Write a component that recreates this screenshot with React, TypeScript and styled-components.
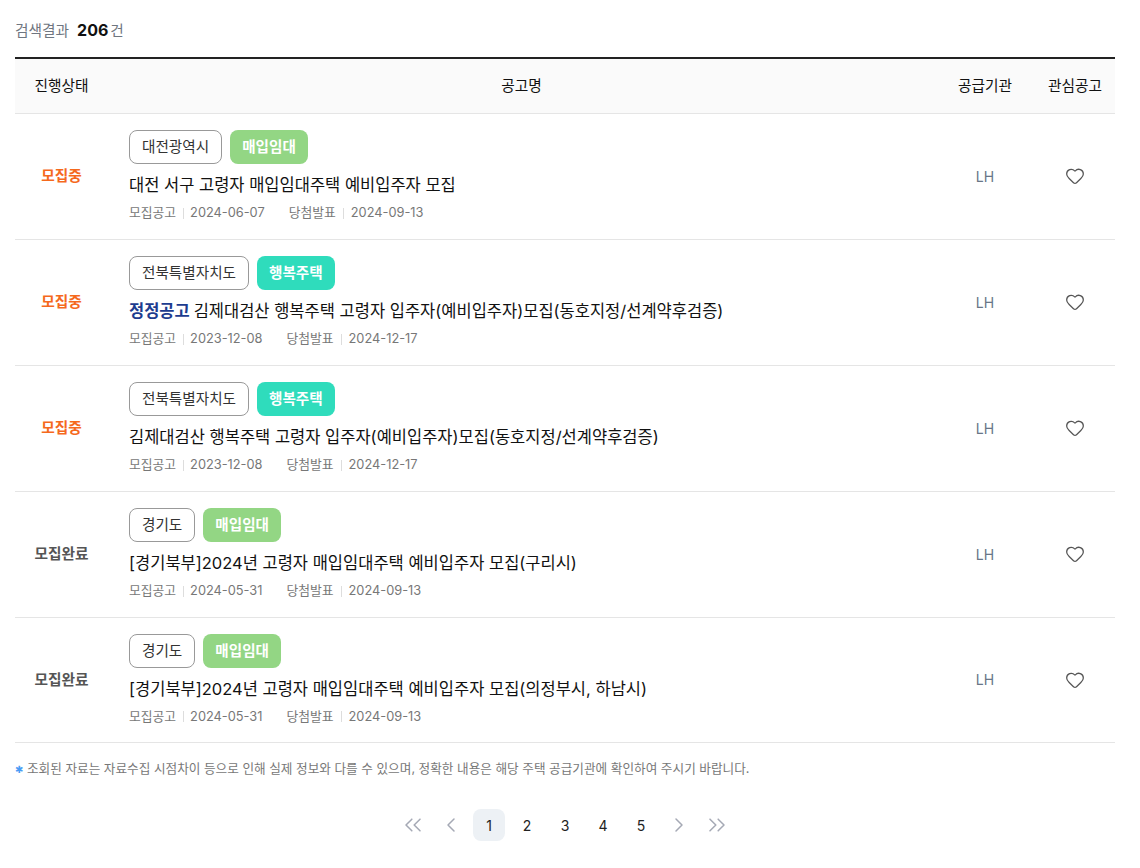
import React from "react";
import styled, { createGlobalStyle } from "styled-components";
import { ChevronLeft, ChevronRight, ChevronsLeft, ChevronsRight, Heart } from "lucide-react";

const GlobalStyle = createGlobalStyle`
  body {
    margin: 0;
    background: #fff;
    font-family: Inter, "Noto Sans CJK KR", sans-serif;
    color: #111;
  }
`;

const Page = styled.div`
  width: 1100px;
  padding: 0 25px 0 15px;
`;

const Summary = styled.div`
  display: flex;
  align-items: center;
  height: 57px;
  padding-top: 2px;
  box-sizing: border-box;
  font-size: 14.7px;
  color: #6f7680;
`;

const Count = styled.strong`
  margin-left: 8px;
  margin-right: 2px;
  font-size: 16px;
  font-weight: 700;
  color: #111;
`;

const HeadRow = styled.div`
  display: grid;
  grid-template-columns: 93px 827px 100px 80px;
  align-items: center;
  height: 51px;
  padding-bottom: 3px;
  border-top: 2px solid #222;
  border-bottom: 1px solid #e5e5e5;
  background: #fafafa;
  font-size: 14.7px;
  text-align: center;
`;

const Row = styled.div`
  display: grid;
  grid-template-columns: 93px 827px 100px 80px;
  align-items: center;
  height: 125px;
  border-bottom: 1px solid #e5e5e5;
  text-align: center;
  &:nth-of-type(7) {
    height: 124px;
  }
`;

const Status = styled.div<{ $open: boolean }>`
  margin-top: -4px;
  font-size: 14.7px;
  font-weight: 700;
  color: ${(p) => (p.$open ? "#f5691d" : "#555")};
`;

const Body = styled.div`
  display: flex;
  flex-direction: column;
  align-items: flex-start;
  padding-left: 21px;
  text-align: left;
`;

const Tags = styled.div`
  display: flex;
  gap: 8px;
`;

const Region = styled.span`
  display: flex;
  align-items: center;
  height: 34px;
  padding: 0 12px 3px;
  box-sizing: border-box;
  border: 1px solid #999;
  border-radius: 8px;
  font-size: 14.6px;
  color: #333;
`;

const Kind = styled.span<{ $color: string }>`
  display: flex;
  align-items: center;
  height: 34px;
  padding: 0 12px 3px;
  box-sizing: border-box;
  border-radius: 8px;
  font-size: 14.6px;
  font-weight: 700;
  color: #fff;
  background: ${(p) => p.$color};
`;

const Title = styled.div`
  margin-top: 9px;
  font-size: 16.5px;
  line-height: 24px;
  color: #111;
`;

const Fix = styled.b`
  font-weight: 700;
  color: #1d3c8f;
`;

const Meta = styled.div`
  display: flex;
  align-items: center;
  margin-top: 6px;
  font-size: 12.8px;
  line-height: 20px;
  color: #777;
`;

const MetaLabel = styled.span`
  display: flex;
  align-items: center;
  &::after {
    content: "";
    width: 1px;
    height: 11px;
    margin: 0 7px;
    background: #ddd;
  }
`;

const MetaDate = styled.span`
  margin-left: -1px;
  margin-right: 24px;
`;

const Agency = styled.div`
  margin-top: -1px;
  font-size: 14px;
  color: #687687;
`;

const Like = styled.div`
  display: flex;
  justify-content: center;
  margin-top: -1px;
  color: #555;
`;

const Note = styled.p`
  margin: 17px 0 0;
  font-size: 12.65px;
  line-height: 18px;
  color: #777;
`;

const Star = styled.span`
  font-family: "DejaVu Sans", sans-serif;
  font-size: 10px;
  color: #4a9cf5;
`;

const Pager = styled.nav`
  display: flex;
  justify-content: center;
  align-items: center;
  gap: 6px;
  margin-top: 30px;
`;

const PageButton = styled.button<{ $active?: boolean }>`
  display: flex;
  align-items: center;
  justify-content: center;
  width: 32px;
  height: 32px;
  padding: 0;
  border: 0;
  border-radius: 8px;
  background: ${(p) => (p.$active ? "#edf1f5" : "transparent")};
  font: 14px Inter, sans-serif;
  color: #222;
`;

const ArrowButton = styled(PageButton)`
  color: #a5a9b5;
`;

const items = [
  { open: true, region: "대전광역시", kind: "매입임대", title: "대전 서구 고령자 매입임대주택 예비입주자 모집", posted: "2024-06-07", result: "2024-09-13" },
  { open: true, region: "전북특별자치도", kind: "행복주택", fix: true, title: "김제대검산 행복주택 고령자 입주자(예비입주자)모집(동호지정/선계약후검증)", posted: "2023-12-08", result: "2024-12-17" },
  { open: true, region: "전북특별자치도", kind: "행복주택", title: "김제대검산 행복주택 고령자 입주자(예비입주자)모집(동호지정/선계약후검증)", posted: "2023-12-08", result: "2024-12-17" },
  { open: false, region: "경기도", kind: "매입임대", title: "[경기북부]2024년 고령자 매입임대주택 예비입주자 모집(구리시)", posted: "2024-05-31", result: "2024-09-13" },
  { open: false, region: "경기도", kind: "매입임대", title: "[경기북부]2024년 고령자 매입임대주택 예비입주자 모집(의정부시, 하남시)", posted: "2024-05-31", result: "2024-09-13" },
];

export default function App() {
  return (
    <Page>
      <GlobalStyle />
      <Summary>
        검색결과 <Count>206</Count> 건
      </Summary>
      <HeadRow>
        <div>진행상태</div>
        <div>공고명</div>
        <div>공급기관</div>
        <div>관심공고</div>
      </HeadRow>
      {items.map((item, i) => (
        <Row key={i}>
          <Status $open={item.open}>{item.open ? "모집중" : "모집완료"}</Status>
          <Body>
            <Tags>
              <Region>{item.region}</Region>
              <Kind $color={item.kind === "행복주택" ? "#2fdcbc" : "#93d684"}>{item.kind}</Kind>
            </Tags>
            <Title>
              {item.fix && <Fix>정정공고 </Fix>}
              {item.title}
            </Title>
            <Meta>
              <MetaLabel>모집공고</MetaLabel>
              <MetaDate>{item.posted}</MetaDate>
              <MetaLabel>당첨발표</MetaLabel>
              <span>{item.result}</span>
            </Meta>
          </Body>
          <Agency>LH</Agency>
          <Like>
            <Heart size={20} strokeWidth={1.5} />
          </Like>
        </Row>
      ))}
      <Note>
        <Star>✱</Star> 조회된 자료는 자료수집 시점차이 등으로 인해 실제 정보와 다를 수 있으며, 정확한 내용은 해당 주택 공급기관에 확인하여 주시기 바랍니다.
      </Note>
      <Pager>
        <ArrowButton><ChevronsLeft size={28} strokeWidth={1.3} /></ArrowButton>
        <ArrowButton><ChevronLeft size={24} strokeWidth={1.5} /></ArrowButton>
        <PageButton $active>1</PageButton>
        <PageButton>2</PageButton>
        <PageButton>3</PageButton>
        <PageButton>4</PageButton>
        <PageButton>5</PageButton>
        <ArrowButton><ChevronRight size={24} strokeWidth={1.5} /></ArrowButton>
        <ArrowButton><ChevronsRight size={28} strokeWidth={1.3} /></ArrowButton>
      </Pager>
    </Page>
  );
}
